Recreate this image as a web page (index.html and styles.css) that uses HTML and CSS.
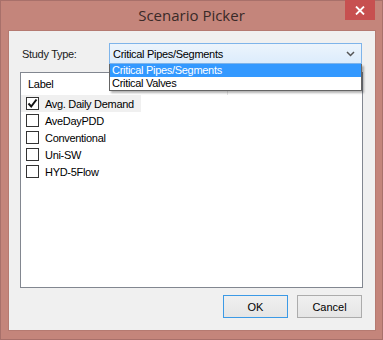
FILE: index.html
```html
<!DOCTYPE html>
<html lang="en">
<head>
 <meta charset="UTF-8">
 <title>Scenario Picker</title>
 <link rel="stylesheet" href="styles.css">
</head>
<body>

 <div class="window">
 <div class="titlebar">
 <span></span>
 <span class="title">Scenario Picker</span>
 <button class="close-btn">
 <svg width="10" height="9" viewBox="0 0 10 9"><path d="M1 0.5 L9 8.5 M9 0.5 L1 8.5" stroke="#fff" stroke-width="1.8"/></svg>
 </button>
 </div>

 <div class="client">
 <!-- Study type -->
 <div class="study-row">
 <span class="study-label">Study Type:</span>
 <div class="combo">
 <div class="combo-box">
 <span>Critical Pipes/Segments</span>
 <svg width="9" height="6" viewBox="0 0 9 6"><path d="M1 1 L4.5 4.5 L8 1" fill="none" stroke="#555" stroke-width="1.5"/></svg>
 </div>
 <ul class="dropdown">
 <li class="selected">Critical Pipes/Segments</li>
 <li>Critical Valves</li>
 </ul>
 </div>
 </div>

 <!-- Scenario list -->
 <div class="listview">
 <div class="list-header">
 <span class="col-label">Label</span>
 </div>
 <div class="list-row active">
 <span class="check checked">
 <svg width="11" height="11" viewBox="0 0 11 11"><path d="M1.5 5.5 L4.2 8.5 L9.5 1.5" fill="none" stroke="#111" stroke-width="2"/></svg>
 </span>
 <span>Avg. Daily Demand</span>
 </div>
 <div class="list-row"><span class="check"></span><span>AveDayPDD</span></div>
 <div class="list-row"><span class="check"></span><span>Conventional</span></div>
 <div class="list-row"><span class="check"></span><span>Uni-SW</span></div>
 <div class="list-row"><span class="check"></span><span>HYD-5Flow</span></div>
 </div>

 <div class="buttons">
 <button class="btn default">OK</button>
 <button class="btn">Cancel</button>
 </div>
 </div>
 </div>

</body>
</html>
```

FILE: styles.css
```css
/* General */
body {
margin: 0;
font-family: "Liberation Sans", Arial, sans-serif;
font-size: 11px;
letter-spacing: -0.3px;
color: #000;
}

/* Window frame */
.window {
width: 383px;
height: 340px;
box-sizing: border-box;
background: #c4857b;
border: 1px solid #a8706a;
display: flex;
flex-direction: column;
}

.titlebar {
height: 29px;
display: grid;
grid-template-columns: 1fr auto 1fr;
align-items: start;
}

.title {
font-family: "Open Sans", "Noto Sans", sans-serif;
font-size: 15px;
letter-spacing: 0;
color: #3a2a28;
padding-top: 4px;
}

.close-btn {
justify-self: end;
width: 30px;
height: 20px;
margin-right: 7px;
margin-top: -1px;
border: none;
padding: 0;
background: #c75050;
display: flex;
align-items: center;
justify-content: center;
}

/* Client area */
.client {
margin: 0 6px 0 7px;
height: 301px;
box-sizing: border-box;
background: #f0f0f0;
border: 1px solid #b57a71;
padding: 12px 0 0 11px;
}

.study-row {
display: flex;
align-items: center;
height: 21px;
}

.study-label {
width: 87px;
padding-left: 2px;
color: #1a1a1a;
}

.combo {
position: relative;
}

.combo-box {
width: 253px;
height: 21px;
box-sizing: border-box;
border: 1px solid #7eb4ea;
background: linear-gradient(#ecf4fc, #dcecfc);
display: flex;
align-items: center;
justify-content: space-between;
padding: 0 6px 0 3px;
}

/* Open dropdown list */
.dropdown {
position: absolute;
top: 21px;
left: 0;
width: 251px;
margin: 0;
padding: 0;
list-style: none;
background: #fff;
border: 1px solid #646464;
border-top: none;
box-shadow: 2px 2px 2px rgba(0, 0, 0, 0.3);
z-index: 10;
}

.dropdown li {
height: 13px;
line-height: 13px;
padding-left: 2px;
}

.dropdown li.selected {
background: #3399ff;
color: #fff;
}

/* List view */
.listview {
margin-top: 8px;
width: 343px;
height: 216px;
box-sizing: border-box;
border: 1px solid #828790;
background: #fff;
}

.list-header {
height: 22px;
display: flex;
align-items: center;
}

.col-label {
width: 199px;
height: 22px;
line-height: 22px;
padding-left: 7px;
border-right: 1px solid #e5e5e5;
}

.list-row {
height: 17px;
display: flex;
align-items: center;
gap: 6px;
padding-left: 5px;
width: fit-content;
padding-right: 7px;
}

.list-row.active {
background: #f0f0f0;
}

.check {
width: 11px;
height: 11px;
border: 1px solid #333;
background: #fff;
display: flex;
align-items: center;
justify-content: center;
}

/* Buttons */
.buttons {
display: flex;
justify-content: flex-end;
gap: 9px;
margin-top: 7px;
padding-right: 13px;
}

.btn {
width: 65px;
height: 23px;
font-family: "Liberation Sans", Arial, sans-serif;
font-size: 11px;
color: #000;
border: 1px solid #acacac;
background: linear-gradient(#f0f0f0, #e5e5e5);
padding: 0;
}

.btn.default {
border-color: #3c9ae6;
}
```
